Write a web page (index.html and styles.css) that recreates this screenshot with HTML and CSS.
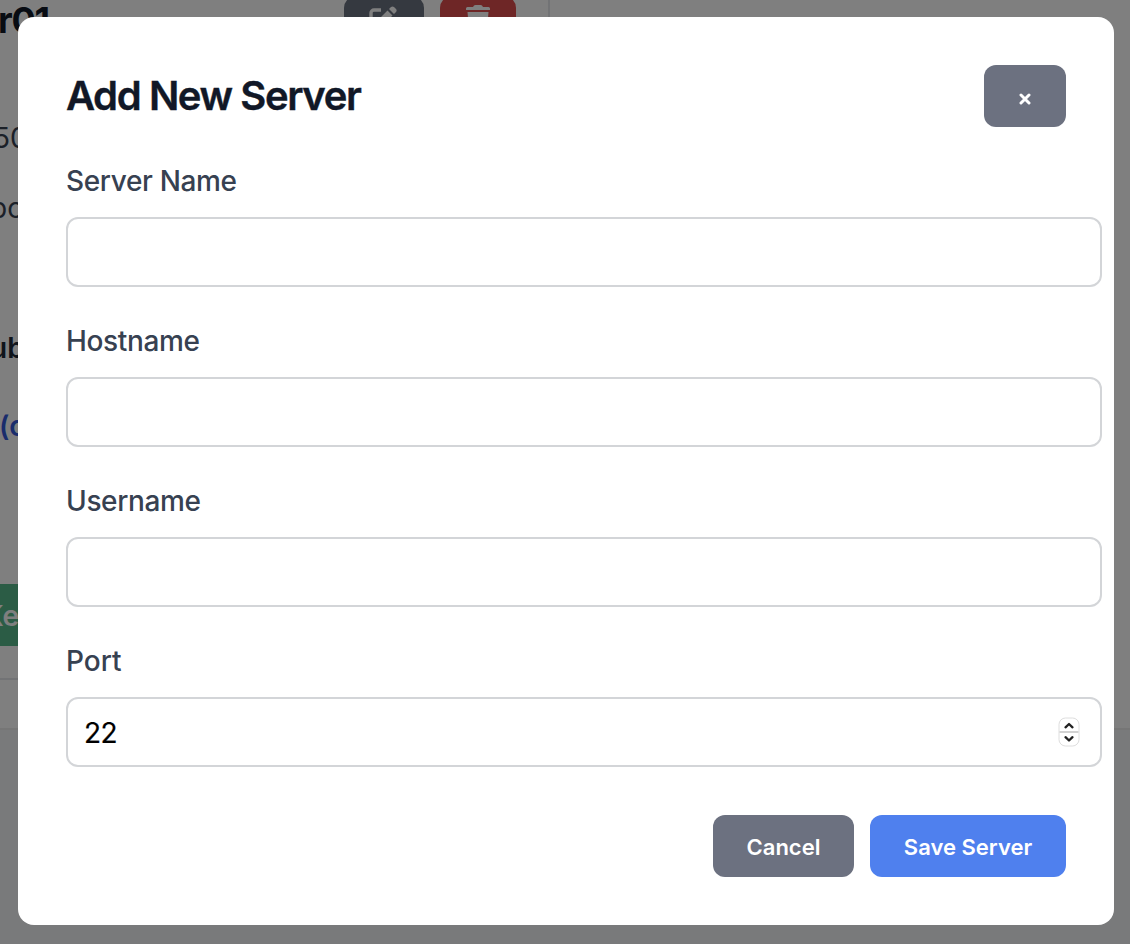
FILE: index.html
```html
<!DOCTYPE html>
<html lang="en">
<head>
<meta charset="utf-8">
<title>Add New Server</title>
<link rel="stylesheet" href="styles.css">
</head>
<body>
<main class="page">
  <section class="details">
    <header class="details-head">
      <h1 class="details-title">r01</h1>
      <div class="icon-btn edit">
        <svg width="28" height="28" viewBox="0 0 28 28"><path d="M12 4H5a3 3 0 0 0-3 3v15a3 3 0 0 0 3 3h14a3 3 0 0 0 3-3v-6" fill="none" stroke="#fff" stroke-width="3.400"/><path d="M9 14 18.500 4.500l5 5-9.500 9.500-6 1zM20 3l2-2q1.500-1.200 3 0l2 2q1.300 1.500 0 3l-2 2z" fill="#fff"/></svg>
      </div>
      <div class="icon-btn delete">
        <svg width="24" height="28" viewBox="0 0 24 28"><path d="M0 3.500Q0 2 1.500 2H7l1-1.500Q8.500 0 9.500 0h5q1 0 1.500.5L17 2h5.500Q24 2 24 3.500V5H0zM1.500 7h21L21 25q-.3 3-3 3H6q-2.700 0-3-3z" fill="#fff"/></svg>
      </div>
    </header>
    <p class="row port">50</p>
    <p class="row type">po</p>
    <p class="row key">ub</p>
    <p class="row link">(o</p>
    <div class="key-btn">Ke</div>
    <div class="rule"></div>
  </section>
  <section class="side"></section>
</main>
<div class="overlay">
  <form class="modal">
    <header class="modal-head">
      <h2 class="modal-title">Add New Server</h2>
      <button type="button" class="btn close" aria-label="Close"><svg width="12" height="12" viewBox="0 0 12 12"><path d="M2 2l8 8M10 2l-8 8" stroke="#fff" stroke-width="3" stroke-linecap="round"/></svg></button>
    </header>
    <div class="field"><label class="label name" for="name">Server Name</label><input class="input" id="name" type="text"></div>
    <div class="field"><label class="label" for="host">Hostname</label><input class="input" id="host" type="text"></div>
    <div class="field"><label class="label" for="user">Username</label><input class="input" id="user" type="text"></div>
    <div class="field"><label class="label port-label" for="port">Port</label>
      <div class="input number"><span class="value" id="port">22</span>
        <svg class="stepper" width="24" height="32" viewBox="0 0 24 32"><rect x="2" y="2" width="20" height="28" rx="6.500" fill="#fff" stroke="#dedede"/><path d="M2.500 16h19" stroke="#d2d2d2" stroke-width="2"/><path d="M8.500 11.300 12 8l3.500 3.300M8.500 21.200l3.500 3.300 3.500-3.300" fill="none" stroke="#222" stroke-width="2.300" stroke-linecap="round" stroke-linejoin="round"/></svg>
      </div>
    </div>
    <footer class="actions">
      <button type="button" class="btn cancel">Cancel</button>
      <button type="button" class="btn save">Save Server</button>
    </footer>
  </form>
</div>
</body>
</html>
```
FILE: styles.css
```css
* { box-sizing: border-box; }
body { margin: 0; height: 944px; overflow: hidden; background: #f3f4f6; font-family: Inter, "Liberation Sans", sans-serif; }
h1, h2, p { margin: 0; }
.page { display: flex; height: 730px; background: #fff; border-bottom: 2px solid #ececed; }
.details { width: 550px; border-right: 2px solid #e5e7eb; overflow: hidden; }
.details-head { display: flex; height: 118px; align-items: flex-start; }
.details-title { width: 345px; margin-left: -2px; flex: none; font-size: 36px; line-height: 40px; font-weight: 700; letter-spacing: -1.2px; color: #111827; }
.icon-btn { display: flex; justify-content: center; height: 62px; padding-top: 10px; border-radius: 12px; }
.edit { width: 80px; margin: -4px 16px 0 1px; padding-right: 2px; background: #6b7280; }
.delete { width: 76px; margin-top: -4px; padding-top: 9px; background: #dc4c4c; }
.row { font-size: 28px; line-height: 40px; height: 70px; color: #374151; white-space: nowrap; }
.port { margin-left: -7px; }
.type { margin-left: -10px; height: 140px; }
.key { margin-left: -10px; height: 78px; font-weight: 600; color: #1f2937; }
.link { margin-left: -1px; height: 178px; font-weight: 600; color: #3459d8; }
.key-btn { height: 62px; width: 120px; text-indent: -16px; background: #56b98a; color: #fff; font-size: 28px; line-height: 64px; font-weight: 600; }
.rule { height: 2px; margin-top: 32px; background: #e5e7eb; }
.overlay { position: fixed; inset: 0; background: rgba(0, 0, 0, .5); padding: 17px 16px 19px 18px; }
.modal { height: 908px; padding: 48px; border-radius: 16px; background: #fff; }
.modal-head { display: flex; align-items: center; justify-content: space-between; height: 62px; margin-bottom: 37px; }
.modal-title { font-size: 40px; line-height: 62px; font-weight: 600; letter-spacing: -1.4px; color: #111827; -webkit-text-stroke: 0.4px #111827; }
.btn { display: flex; align-items: center; justify-content: center; height: 62px; padding: 2px 0 0; border: 0; border-radius: 12px; background: #6c7180; color: #fff; font: 600 22px/30px Inter, "Liberation Sans", sans-serif; }
.close { width: 82px; padding: 5px 1px 0 0; }
.field { margin-bottom: 37px; width: 1036px; }
.label { display: block; margin-bottom: 19px; font-size: 28px; line-height: 34px; font-weight: 500; letter-spacing: -0.35px; color: #374151; }
.port-label { letter-spacing: 0; }
.input { display: block; width: 1036px; height: 70px; border: 2px solid #d3d5d8; border-radius: 12px; background: #fff; font: 28px Inter, "Liberation Sans", sans-serif; }
.number { display: flex; align-items: center; justify-content: space-between; padding: 0 19px 0 16px; }
.value { padding-top: 2px; color: #000; letter-spacing: -0.5px; -webkit-text-stroke: 0.2px #000; }
.actions { display: flex; justify-content: flex-end; gap: 16px; margin-top: 48px; }
.cancel { width: 141px; }
.save { width: 196px; background: #4f80ee; }
```
